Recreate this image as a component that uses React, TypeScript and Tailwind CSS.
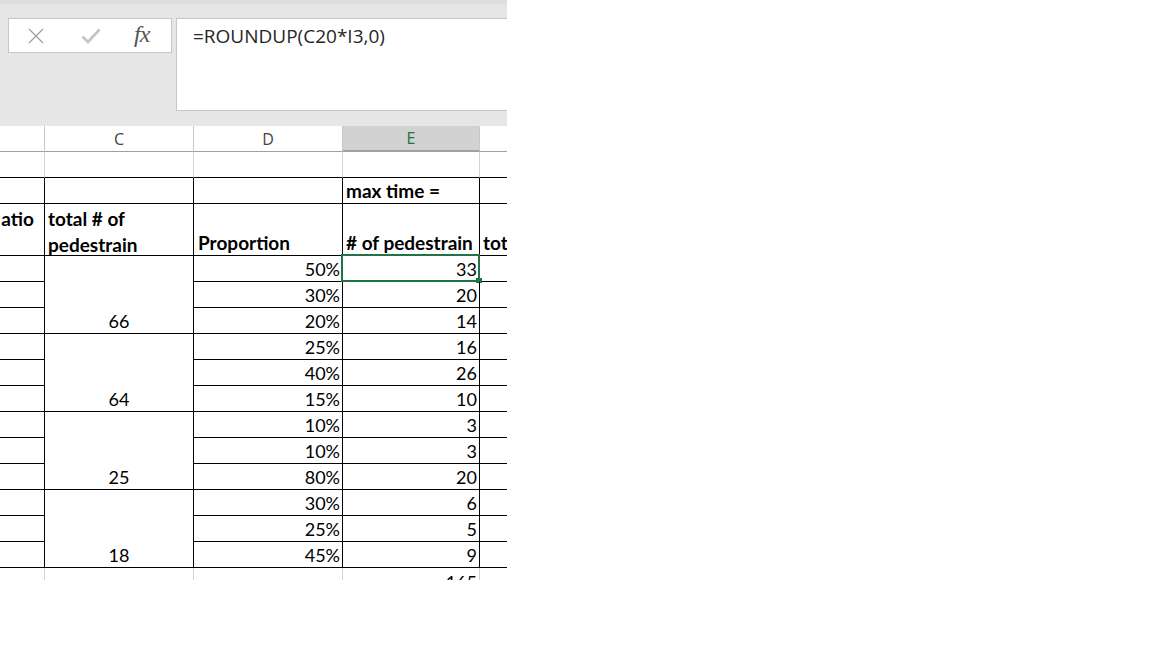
import React from 'react';

type Group = { total: string; rows: [string, string][] };

const groups: Group[] = [
  { total: '66', rows: [['50%', '33'], ['30%', '20'], ['20%', '14']] },
  { total: '64', rows: [['25%', '16'], ['40%', '26'], ['15%', '10']] },
  { total: '25', rows: [['10%', '3'], ['10%', '3'], ['80%', '20']] },
  { total: '18', rows: [['30%', '6'], ['25%', '5'], ['45%', '9']] },
];

const cell = 'h-[26px] border-r border-b border-black flex items-end pb-[2px] leading-[20px]';

function FormulaBar() {
  return (
    <div className="h-[126px] bg-[#e6e6e6] relative">
      <div className="h-[4px] bg-[#dfddda]" />
      <div className="flex items-start pl-[8px] pt-[14px] gap-[4px]">
        <div className="w-[164px] h-[35px] bg-white border border-[#c6c6c6] flex items-center">
          {/* cancel */}
          <svg className="ml-[18px]" width="18" height="18" viewBox="0 0 18 18">
            <path d="M2 2 L16 16 M16 2 L2 16" stroke="#a3a3a3" strokeWidth="1.4" fill="none" />
          </svg>
          {/* enter */}
          <svg className="ml-[36px]" width="20" height="16" viewBox="0 0 20 16">
            <path d="M1.5 8.5 L7 14 L18.5 1.5" stroke="#c4c4c4" strokeWidth="2.6" fill="none" />
          </svg>
          <span className="ml-[33px] font-['Liberation_Serif',serif] italic text-[24px] leading-none text-[#555] -mt-[3px] tracking-[-1px]">
            fx
          </span>
        </div>
        <div className="flex-1 h-[93px] bg-white border border-[#c6c6c6] border-r-0 pl-[16px] pt-[3px] font-['Open_Sans',sans-serif] text-[19px] text-[#262626]">
          =ROUNDUP(C20*I3,0)
        </div>
      </div>
    </div>
  );
}

function ColumnHeaders() {
  const base = 'h-[26px] border-r border-[#c8c8c8] border-b border-b-[#a0a0a0] flex items-center justify-center';
  return (
    <div className="grid grid-cols-[45px_149px_149px_137px_27px] font-['Open_Sans',sans-serif] text-[16px] text-[#444]">
      <div className={base} />
      <div className={base}>C</div>
      <div className={base}>D</div>
      <div className={`${base} bg-[#d2d2d2] text-[#217346] border-b-2 border-b-[#217346]`}>E</div>
      <div className={`${base} border-r-0`} />
    </div>
  );
}

export default function App() {
  return (
    <div className="w-[1152px] h-[648px] bg-white">
      <div className="w-[507px] h-[580px] overflow-hidden">
        <FormulaBar />
        <ColumnHeaders />
        <div className="grid grid-cols-[45px_149px_149px_137px_27px] font-['Lato',sans-serif] text-[18px] text-black">
          {/* row 1 */}
          <div className={`${cell} border-r-[#d4d4d4]`} />
          <div className={`${cell} border-r-[#d4d4d4]`} />
          <div className={`${cell} border-r-[#d4d4d4]`} />
          <div className={`${cell} border-r-[#d4d4d4]`} />
          <div className={`${cell} border-r-0`} />

          {/* row 2 */}
          <div className={cell} />
          <div className={cell} />
          <div className={cell} />
          <div className={`${cell} font-bold text-[19px] pl-[3px]`}>max time =</div>
          <div className={`${cell} border-r-0`} />

          {/* row 3 */}
          <div className="h-[52px] border-r border-b border-black font-bold text-[19px] pt-[2px] pr-[10px] leading-[26px] whitespace-nowrap flex justify-end overflow-hidden">
            atio
          </div>
          <div className="h-[52px] border-r border-b border-black font-bold text-[19px] pl-[3px] pt-[2px] leading-[26px] whitespace-nowrap">
            total # of
            <br />
            pedestrain
          </div>
          <div className="h-[52px] border-r border-b border-black font-bold text-[19px] pl-[4px] pb-[2px] leading-[20px] flex items-end">
            Proportion
          </div>
          <div className="h-[52px] border-r border-b border-black font-bold text-[19px] pl-[3px] pb-[2px] leading-[20px] flex items-end whitespace-nowrap">
            # of pedestrain
          </div>
          <div className="h-[52px] border-b border-black font-bold text-[19px] pl-[3px] pb-[2px] leading-[20px] flex items-end whitespace-nowrap overflow-hidden">
            tot
          </div>

          {groups.map((g, gi) =>
            g.rows.map(([pct, n], ri) => (
              <React.Fragment key={`${gi}-${ri}`}>
                <div className={cell} />
                {ri === 0 && (
                  <div className="row-span-3 border-r border-b border-black flex items-end justify-center pb-[2px] leading-[20px]">
                    {g.total}
                  </div>
                )}
                <div className={`${cell} justify-end pr-[2px]`}>{pct}</div>
                <div className={`${cell} justify-end pr-[2px] relative`}>
                  {n}
                  {gi === 0 && ri === 0 && (
                    <>
                      <div className="absolute -left-[2px] -top-[2px] -right-[1px] -bottom-[1px] border-2 border-[#217346]" />
                      <div className="absolute -right-[3px] -bottom-[2px] w-[6px] h-[5px] bg-[#217346]" />
                    </>
                  )}
                </div>
                <div className={`${cell} border-r-0`} />
              </React.Fragment>
            ))
          )}

          {/* last row */}
          <div className="h-[26px] border-r border-[#d4d4d4]" />
          <div className="h-[26px] border-r border-[#d4d4d4]" />
          <div className="h-[26px] border-r border-[#d4d4d4]" />
          <div className="h-[26px] border-r border-[#d4d4d4] flex items-start justify-end pr-[2px] pt-[4px] leading-[20px]">
            165
          </div>
          <div className="h-[26px]" />
        </div>
      </div>
    </div>
  );
}
